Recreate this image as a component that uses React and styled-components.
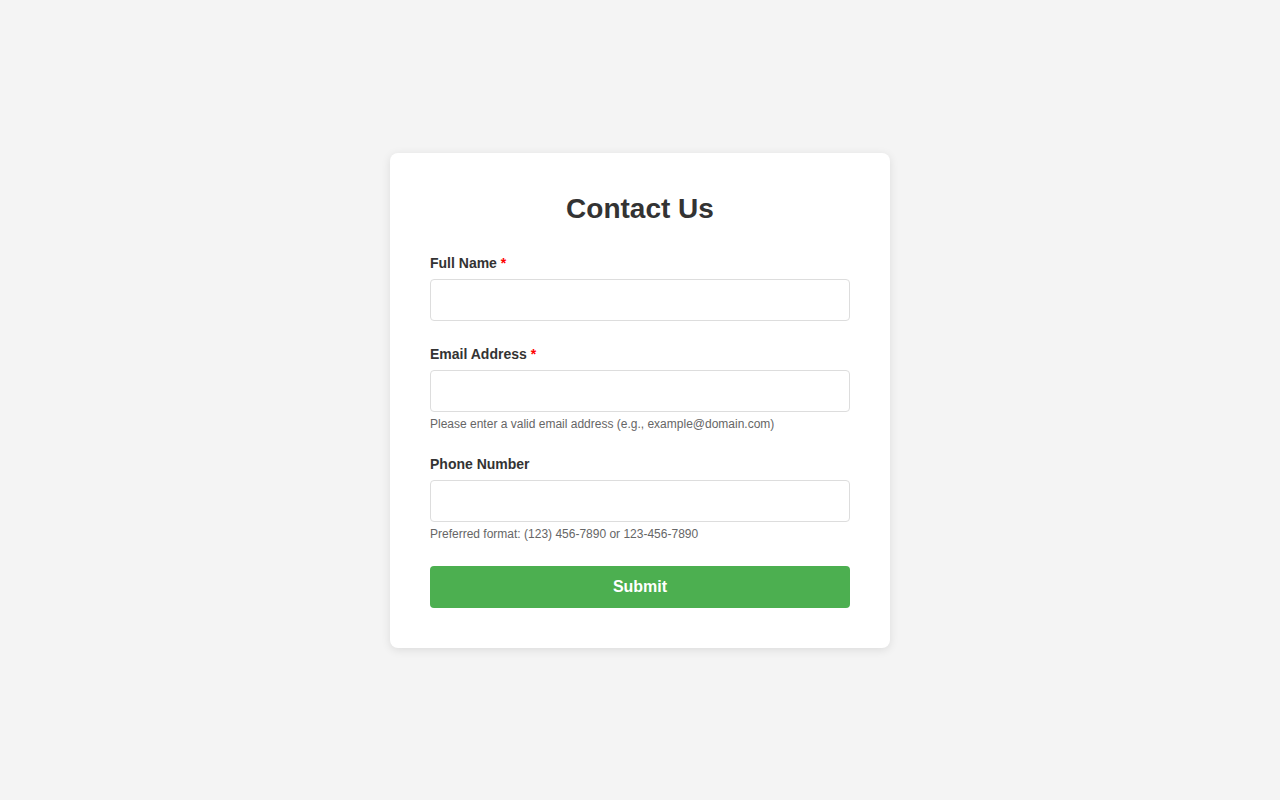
import React from 'react'
import styled, { createGlobalStyle } from 'styled-components'

const GlobalStyle = createGlobalStyle`
  * { box-sizing: border-box; }
  body {
    margin: 0;
    background: #f4f4f4;
    font-family: "Liberation Sans", Arial, sans-serif;
    color: #333;
  }
`

const Page = styled.div`
  min-height: 100vh;
  display: flex;
  align-items: center;
  justify-content: center;
`

const Card = styled.form`
  width: 500px;
  background: #fff;
  border-radius: 8px;
  box-shadow: 0 2px 10px rgba(0, 0, 0, 0.1);
  padding: 40px;
  display: flex;
  flex-direction: column;
`

const Title = styled.h2`
  margin: 0 0 30px;
  font-size: 28px;
  line-height: 32px;
  text-align: center;
  color: #333;
`

const Group = styled.div`
  display: flex;
  flex-direction: column;
  margin-bottom: 25px;
`

const Label = styled.label`
  font-size: 14px;
  line-height: 16px;
  font-weight: bold;
  color: #333;
  margin-bottom: 8px;
`

const Required = styled.span`
  color: red;
`

const Input = styled.input`
  width: 100%;
  height: 42px;
  padding: 10px;
  border: 1px solid #ddd;
  border-radius: 4px;
  font-size: 16px;
  font-family: inherit;
  outline: none;
`

const Hint = styled.small`
  margin-top: 5px;
  font-size: 12px;
  line-height: 14px;
  color: #666;
`

const Submit = styled.button`
  height: 42px;
  border: none;
  border-radius: 4px;
  background: #4caf50;
  color: #fff;
  font-size: 16px;
  font-weight: bold;
  font-family: inherit;
  cursor: pointer;
`

export default function App() {
  return (
    <Page>
      <GlobalStyle />
      <Card onSubmit={(e) => e.preventDefault()}>
        <Title>Contact Us</Title>
        <Group>
          <Label htmlFor="name">Full Name <Required>*</Required></Label>
          <Input id="name" type="text" />
        </Group>
        <Group>
          <Label htmlFor="email">Email Address <Required>*</Required></Label>
          <Input id="email" type="email" />
          <Hint>Please enter a valid email address (e.g., example@domain.com)</Hint>
        </Group>
        <Group>
          <Label htmlFor="phone">Phone Number</Label>
          <Input id="phone" type="tel" />
          <Hint>Preferred format: (123) 456-7890 or 123-456-7890</Hint>
        </Group>
        <Submit type="submit">Submit</Submit>
      </Card>
    </Page>
  )
}
